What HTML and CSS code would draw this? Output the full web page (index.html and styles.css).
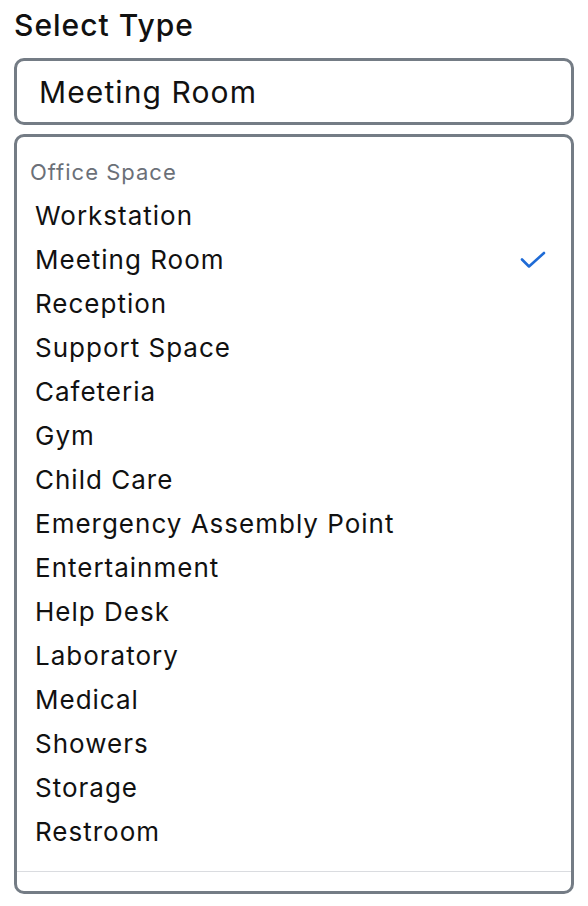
FILE: index.html
```html
<!DOCTYPE html>
<html>
<head>
<meta charset="utf-8">
<link rel="stylesheet" href="styles.css">
</head>
<body>
<div class="field">
  <div class="label">Select Type</div>
  <div class="input">Meeting Room</div>
  <div class="menu">
    <div class="group">Office Space</div>
    <ul class="options">
      <li class="option">Workstation</li>
      <li class="option selected">Meeting Room
        <svg class="check" width="26" height="20" viewBox="0 0 26 20"><path d="M2 9.5 L9 16.5 L24 3" fill="none" stroke="#1f6bd6" stroke-width="2.6" stroke-linecap="round" stroke-linejoin="round"/></svg>
      </li>
      <li class="option">Reception</li>
      <li class="option">Support Space</li>
      <li class="option">Cafeteria</li>
      <li class="option">Gym</li>
      <li class="option">Child Care</li>
      <li class="option">Emergency Assembly Point</li>
      <li class="option">Entertainment</li>
      <li class="option">Help Desk</li>
      <li class="option">Laboratory</li>
      <li class="option">Medical</li>
      <li class="option">Showers</li>
      <li class="option">Storage</li>
      <li class="option">Restroom</li>
    </ul>
    <div class="footer"></div>
  </div>
</div>
</body>
</html>
```
FILE: styles.css
```css
* { box-sizing: border-box; }
body {
  margin: 0;
  padding: 8px 14px 0 14px;
  background: #fff;
  font-family: Inter, "Noto Sans", sans-serif;
  color: #111;
}
.label {
  font-size: 30px;
  font-weight: 500;
  line-height: 34px;
  letter-spacing: 1px;
  margin-bottom: 16px;
}
.input {
  height: 67px;
  border: 3px solid #747c85;
  border-radius: 10px;
  padding: 0 22px;
  font-size: 30px;
  letter-spacing: 1.1px;
  display: flex;
  align-items: center;
}
.menu {
  margin-top: 9px;
  border: 3px solid #747c85;
  border-radius: 10px;
  padding-top: 13px;
}
.group {
  font-size: 22px;
  line-height: 44px;
  letter-spacing: 1px;
  color: #6b7078;
  padding-left: 13px;
}
.options {
  list-style: none;
  margin: 0;
  padding: 0;
}
.option {
  font-size: 26px;
  line-height: 44px;
  height: 44px;
  letter-spacing: 1px;
  padding: 0 25px 0 18px;
  display: flex;
  align-items: center;
  justify-content: space-between;
}
.check { display: block; }
.footer {
  margin-top: 17px;
  border-top: 1px solid #dadce0;
  height: 20px;
}
```
